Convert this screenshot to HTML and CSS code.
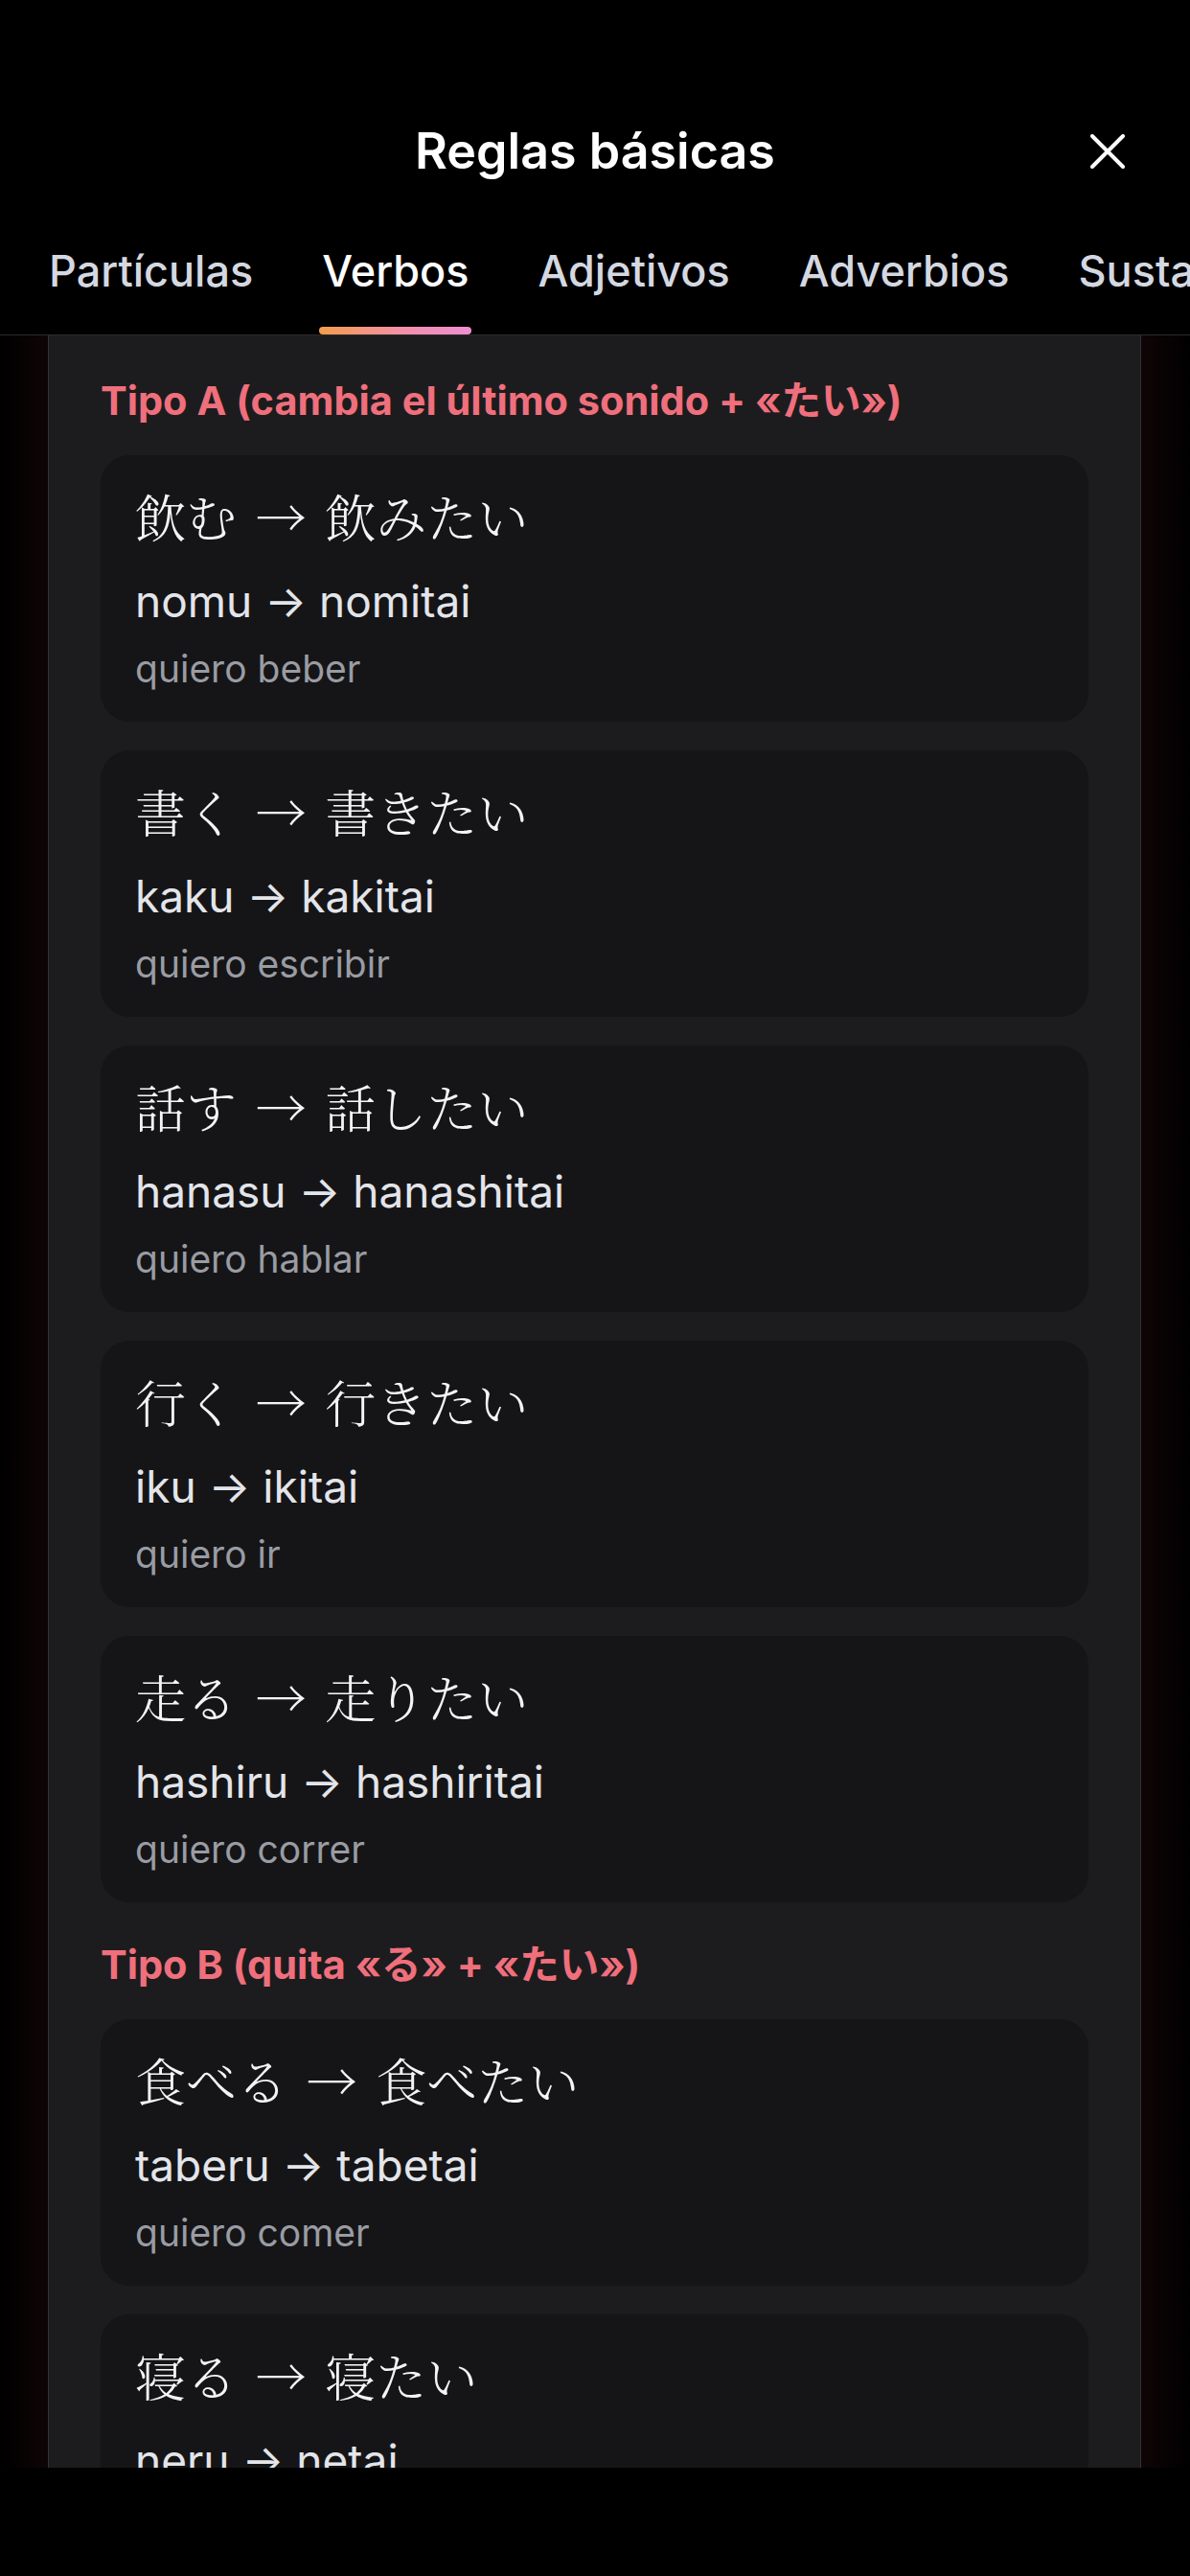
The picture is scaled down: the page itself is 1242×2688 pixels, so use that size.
FILE: index.html
```html
<!DOCTYPE html>
<html lang="es">
  <head>
    <meta charset="UTF-8" />
    <meta name="viewport" content="width=device-width, initial-scale=1.0" />
    <title>Reglas básicas</title>
    <link rel="stylesheet" href="styles.css">
  </head>

  <body>
    <div class="header">
      <div class="titlebar">
        <span></span>
        <h1 class="title">Reglas básicas</h1>
        <button class="close" aria-label="Cerrar">
          <svg width="36" height="36" viewBox="0 0 36 36">
            <path d="M2 2 L34 34 M34 2 L2 34" stroke="#fff" stroke-width="4" stroke-linecap="round" fill="none" />
          </svg>
        </button>
      </div>
      <ul class="tabs">
        <li>Partículas<i></i></li>
        <li class="active">Verbos<i></i></li>
        <li>Adjetivos<i></i></li>
        <li>Adverbios<i></i></li>
        <li>Sustantivos<i></i></li>
      </ul>
    </div>

    <div class="stage">
      <div class="panel">
        <div class="section">
          <h2 class="section-title">Tipo A (cambia el último sonido + «たい»)</h2>
          <div class="card">
            <p class="jp">飲む → 飲みたい</p>
            <p class="romaji">nomu → nomitai</p>
            <p class="meaning">quiero beber</p>
          </div>
          <div class="card">
            <p class="jp">書く → 書きたい</p>
            <p class="romaji">kaku → kakitai</p>
            <p class="meaning">quiero escribir</p>
          </div>
          <div class="card">
            <p class="jp">話す → 話したい</p>
            <p class="romaji">hanasu → hanashitai</p>
            <p class="meaning">quiero hablar</p>
          </div>
          <div class="card">
            <p class="jp">行く → 行きたい</p>
            <p class="romaji">iku → ikitai</p>
            <p class="meaning">quiero ir</p>
          </div>
          <div class="card">
            <p class="jp">走る → 走りたい</p>
            <p class="romaji">hashiru → hashiritai</p>
            <p class="meaning">quiero correr</p>
          </div>
        </div>

        <div class="section">
          <h2 class="section-title">Tipo B (quita «る» + «たい»)</h2>
          <div class="card">
            <p class="jp">食べる → 食べたい</p>
            <p class="romaji">taberu → tabetai</p>
            <p class="meaning">quiero comer</p>
          </div>
          <div class="card">
            <p class="jp">寝る → 寝たい</p>
            <p class="romaji">neru → netai</p>
            <p class="meaning">quiero dormir</p>
          </div>
        </div>
      </div>
    </div>

    <div class="footer"></div>
  </body>
</html>
```

FILE: styles.css
```css
body {
  margin: 0;
  padding: 0;
  background: #000;
  font-family: Inter, "Noto Sans", "Noto Sans CJK JP", sans-serif;
  color: #fff;
  height: 2688px;
  overflow: hidden;
}

/* cabecera */
.header {
  padding-top: 126px;
  border-bottom: 1px solid #2c2c2e;
}
.titlebar {
  display: grid;
  grid-template-columns: 1fr auto 1fr;
  align-items: center;
  height: 64px;
  padding: 0 54px;
}
.title {
  margin: 0;
  font-size: 52px;
  font-weight: 600;
  line-height: 64px;
  color: #fff;
}
.close {
  justify-self: end;
  width: 64px;
  height: 64px;
  padding: 0;
  border: 0;
  background: none;
  display: flex;
  align-items: center;
  justify-content: center;
}

ul {
  list-style: none;
  margin: 0;
  padding: 0;
}
ul.tabs {
  margin-top: 63px;
  padding-left: 47px;
  display: flex;
  gap: 64px;
  overflow: hidden;
  white-space: nowrap;
}
ul.tabs li {
  flex-shrink: 0;
  display: flex;
  flex-direction: column;
  padding: 0 4px;
  font-size: 45px;
  font-weight: 500;
  line-height: 60px;
  color: #d4d8e1;
}
ul.tabs li i {
  display: block;
  height: 8px;
  margin: 28px -3px 0;
  border-radius: 4px;
}
ul.tabs li.active {
  color: #fff;
}
ul.tabs li.active i {
  background: linear-gradient(90deg, #f59d4c 0%, #f28fb0 60%, #f08ed2 100%);
}

/* contenido */
.stage {
  height: 2225px;
  padding: 0 51px 0 50px;
  background: linear-gradient(90deg, #000 0, #0d0405 46px, #0d0405 1196px, #000 1242px);
}
.panel {
  height: 100%;
  box-sizing: border-box;
  overflow: hidden;
  background: #1c1c1e;
  border-left: 1px solid #333336;
  border-right: 1px solid #333336;
  padding: 42px 54px 0;
  display: flex;
  flex-direction: column;
  gap: 39px;
}
.section {
  display: flex;
  flex-direction: column;
  gap: 30px;
}
.section-title {
  margin: 0 0 1px;
  font-size: 41.5px;
  font-weight: 700;
  line-height: 52px;
  color: #ef6f7c;
}

.card {
  background: #151517;
  border-radius: 30px;
  padding: 28px 36px 30px;
  display: flex;
  flex-direction: column;
}
.card p {
  margin: 0;
  white-space: nowrap;
}
.card .jp {
  font-family: "Noto Serif CJK JP", "Noto Sans CJK JP", serif;
  font-size: 53px;
  font-weight: 300;
  line-height: 70px;
  word-spacing: 6px;
  color: #f4f4f5;
}
.card .romaji {
  margin-top: 26px;
  font-size: 46px;
  line-height: 56px;
  color: #e3e5ea;
}
.card .meaning {
  margin-top: 18px;
  font-size: 39px;
  line-height: 50px;
  color: #9a9ca3;
}

.footer {
  height: 113px;
  background: #000;
}
```
